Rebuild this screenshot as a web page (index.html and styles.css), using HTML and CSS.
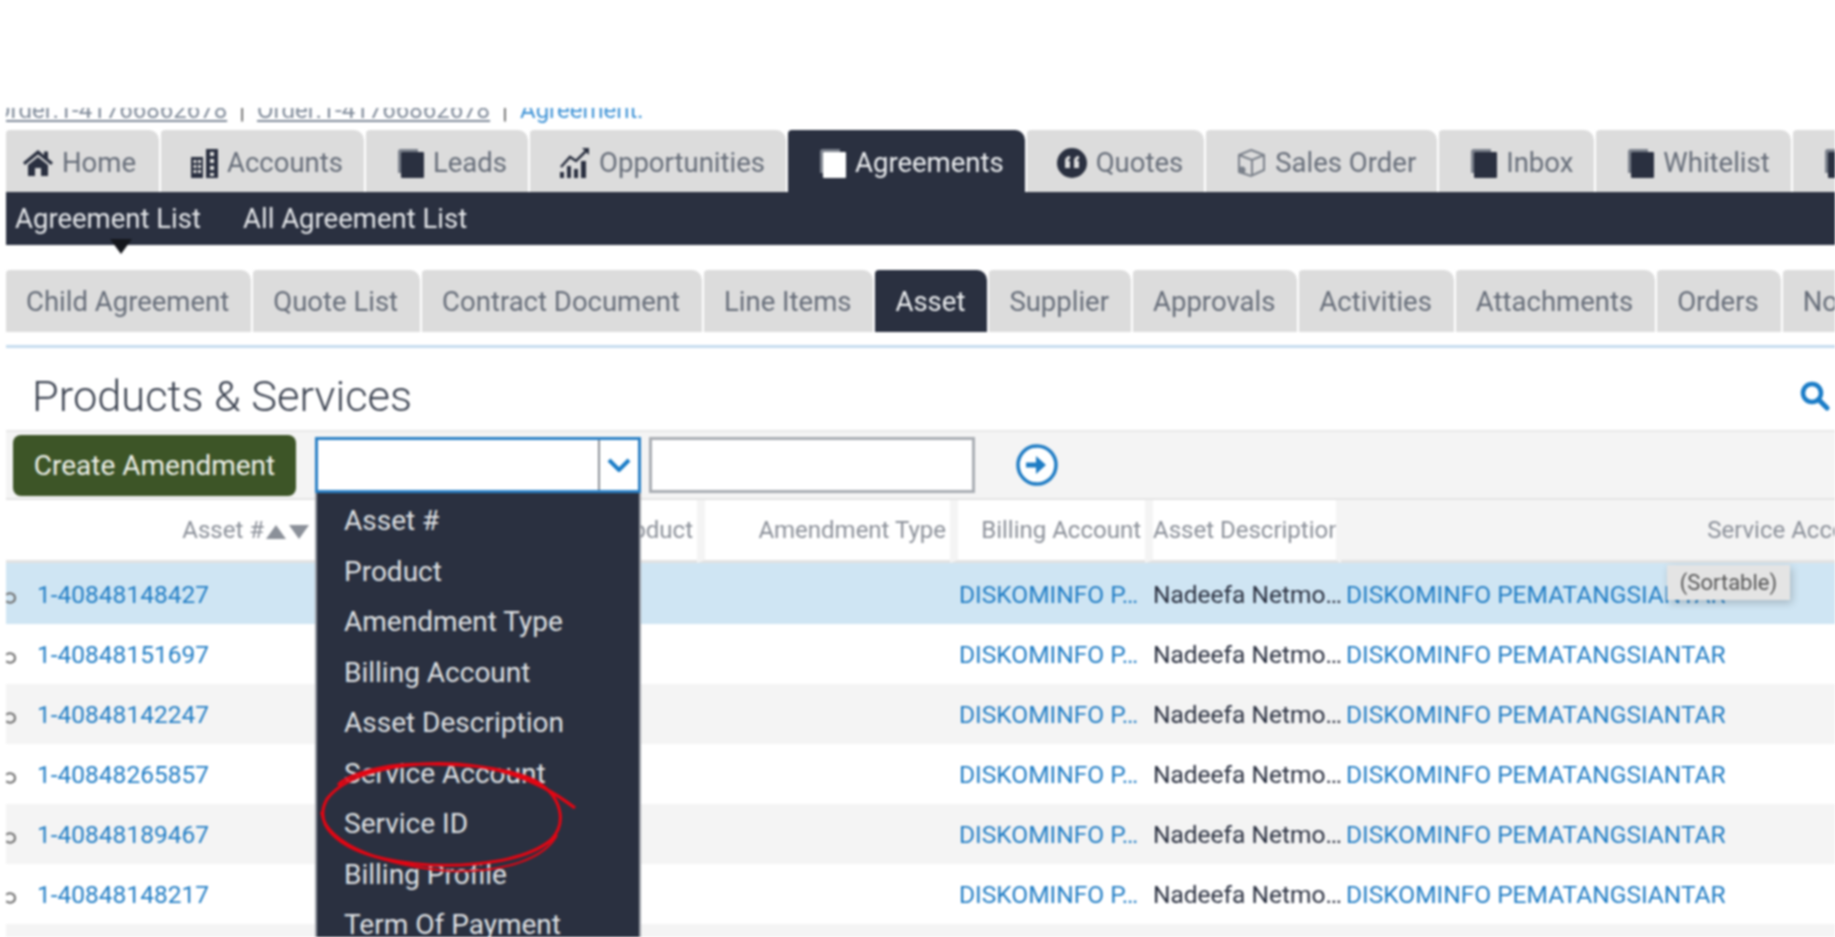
FILE: index.html
```html
<!DOCTYPE html>
<html lang="en">
<head>
    <meta charset="UTF-8">
    <title>Products &amp; Services</title>
    <link rel="stylesheet" href="styles.css">
</head>
<body>
    <svg class="defs" width="0" height="0">
        <symbol id="stack" viewBox="0 0 28 30">
            <path d="M2 25V4a3 3 0 0 1 3-3h17v3H5v21z" class="stack-back"/>
            <rect x="5" y="4" width="23" height="26" rx="1"/>
        </symbol>
    </svg>
    <div class="page">
        <div class="crumbs">
            <div class="crumbs-inner">
                <a href="#" class="crumb-old">Order:1-41766862678</a><span class="sep">|</span><a href="#" class="crumb-old">Order:1-41766862678</a><span class="sep">|</span><a href="#" class="crumb-new">Agreement:</a>
            </div>
        </div>

        <nav class="tabs">
            <a class="tab tab-home"><svg class="ico" width="30" height="26" viewBox="0 0 30 26"><path d="M15 0 0 12.500 2 15 15 4.500 28 15l2-2.500-5-4V1.500h-4v3.700zM15 7 5 15v11h7v-8h6v8h7V15z"/></svg>Home</a>
            <a class="tab"><svg class="ico" width="27" height="30" viewBox="0 0 27 30"><path fill-rule="evenodd" d="M0 9h12v21H0zM2.500 12v3h3v-3zm4.500 0v3h3v-3zm-4.500 5v3h3v-3zm4.500 0v3h3v-3zm-4.500 5v3h3v-3zm4.500 0v3h3v-3zM15 1h12v29H15zm4 3v4h4V4zm0 7v4h4v-4zm0 7v4h4v-4zm0 7v3h4v-3z"/></svg>Accounts</a>
            <a class="tab"><svg class="ico" width="28" height="30"><use href="#stack"/></svg>Leads</a>
            <a class="tab"><svg class="ico" width="30" height="30" viewBox="0 0 30 30"><path d="M0 24h4v6H0zm7-6h4v12H7zm7 3h4v9h-4zm7-8h5v17h-5z"/><path d="M1 19 10 9l6 4L26 3" fill="none" stroke="currentColor" stroke-width="2.500"/><path d="M22 0h7v7z"/></svg>Opportunities</a>
            <a class="tab active"><svg class="ico" width="28" height="30"><use href="#stack"/></svg>Agreements</a>
            <a class="tab"><svg class="ico" width="30" height="30" viewBox="0 0 30 30"><path fill-rule="evenodd" d="M15 0a15 15 0 1 0 0 30 15 15 0 0 0 0-30zM8 13c0-3 2-5 5-5v3c-1 0-2 1-2 2h2v7H8zm9 0c0-3 2-5 5-5v3c-1 0-2 1-2 2h2v7h-5z"/></svg>Quotes</a>
            <a class="tab"><svg class="ico ico-box" width="30" height="30" viewBox="0 0 30 30"><path d="M15 2 28 7v15L15 28 3 24V7zM3 7l13 5 12-5M16 12v15" fill="none" stroke="currentColor" stroke-width="2"/><circle cx="6" cy="22" r="3.500" fill="currentColor"/></svg>Sales Order</a>
            <a class="tab"><svg class="ico" width="28" height="30"><use href="#stack"/></svg>Inbox</a>
            <a class="tab"><svg class="ico" width="28" height="30"><use href="#stack"/></svg>Whitelist</a>
            <a class="tab"><svg class="ico" width="28" height="30"><use href="#stack"/></svg></a>
        </nav>

        <div class="subnav">
            <a class="subnav-item current">Agreement List</a>
            <a class="subnav-item">All Agreement List</a>
        </div>

        <nav class="subtabs">
            <a class="subtab">Child Agreement</a>
            <a class="subtab">Quote List</a>
            <a class="subtab">Contract Document</a>
            <a class="subtab">Line Items</a>
            <a class="subtab active">Asset</a>
            <a class="subtab">Supplier</a>
            <a class="subtab">Approvals</a>
            <a class="subtab">Activities</a>
            <a class="subtab">Attachments</a>
            <a class="subtab">Orders</a>
            <a class="subtab">No</a>
        </nav>
        <div class="rule"></div>

        <div class="section-head">
            <h1>Products &amp; Services</h1>
            <svg class="search" width="30" height="30" viewBox="0 0 30 30"><circle cx="12" cy="12" r="9" fill="none" stroke="currentColor" stroke-width="4.500"/><path d="m18.500 18.500 8.500 8.500" stroke="currentColor" stroke-width="5" stroke-linecap="round"/></svg>
        </div>

        <div class="toolbar">
            <button class="btn-green">Create Amendment</button>
            <div class="select-wrap">
                <div class="select">
                    <div class="select-value"></div>
                    <div class="select-arrow"><svg width="24" height="14" viewBox="0 0 24 14"><path d="M2 2l10 10L22 2" fill="none" stroke="currentColor" stroke-width="4"/></svg></div>
                </div>
                <ul class="dropdown">
                    <li>Asset #</li>
                    <li>Product</li>
                    <li>Amendment Type</li>
                    <li>Billing Account</li>
                    <li>Asset Description</li>
                    <li>Service Account</li>
                    <li>Service ID</li>
                    <li>Billing Profile</li>
                    <li>Term Of Payment</li>
                </ul>
            </div>
            <input class="search-input" type="text">
            <svg class="go" width="42" height="42" viewBox="0 0 42 42"><circle cx="21" cy="21" r="19" fill="#fff" stroke="currentColor" stroke-width="3.500"/><path d="M10 18.500h10V12l10 9-10 9v-6.500H10z" fill="currentColor"/></svg>
        </div>

        <table class="grid">
            <colgroup>
                <col class="c-asset"><col class="c-product"><col class="c-type"><col class="c-billing"><col class="c-desc"><col class="c-service">
            </colgroup>
            <thead>
                <tr>
                    <th class="th-asset">Asset #<span class="sort"><i class="up"></i><i class="down"></i></span></th>
                    <th>Product</th>
                    <th>Amendment Type</th>
                    <th>Billing Account</th>
                    <th class="th-desc"><div class="th-clip">Asset Description</div></th>
                    <th class="th-service">Service Account</th>
                </tr>
            </thead>
            <tbody>
                <tr class="selected">
                    <td><svg class="row-ico" width="12" height="12" viewBox="0 0 12 12"><path d="M2 2.500C7 0 11 2 11 6s-4 6-9 3.500" fill="none" stroke="currentColor" stroke-width="2"/></svg><a href="#">1-40848148427</a></td>
                    <td></td><td></td>
                    <td><a href="#">DISKOMINFO P…</a></td>
                    <td>Nadeefa Netmo…</td>
                    <td><a href="#">DISKOMINFO PEMATANGSIANTAR</a></td>
                </tr>
                <tr>
                    <td><svg class="row-ico" width="12" height="12" viewBox="0 0 12 12"><path d="M2 2.500C7 0 11 2 11 6s-4 6-9 3.500" fill="none" stroke="currentColor" stroke-width="2"/></svg><a href="#">1-40848151697</a></td>
                    <td></td><td></td>
                    <td><a href="#">DISKOMINFO P…</a></td>
                    <td>Nadeefa Netmo…</td>
                    <td><a href="#">DISKOMINFO PEMATANGSIANTAR</a></td>
                </tr>
                <tr class="alt">
                    <td><svg class="row-ico" width="12" height="12" viewBox="0 0 12 12"><path d="M2 2.500C7 0 11 2 11 6s-4 6-9 3.500" fill="none" stroke="currentColor" stroke-width="2"/></svg><a href="#">1-40848142247</a></td>
                    <td></td><td></td>
                    <td><a href="#">DISKOMINFO P…</a></td>
                    <td>Nadeefa Netmo…</td>
                    <td><a href="#">DISKOMINFO PEMATANGSIANTAR</a></td>
                </tr>
                <tr>
                    <td><svg class="row-ico" width="12" height="12" viewBox="0 0 12 12"><path d="M2 2.500C7 0 11 2 11 6s-4 6-9 3.500" fill="none" stroke="currentColor" stroke-width="2"/></svg><a href="#">1-40848265857</a></td>
                    <td></td><td></td>
                    <td><a href="#">DISKOMINFO P…</a></td>
                    <td>Nadeefa Netmo…</td>
                    <td><a href="#">DISKOMINFO PEMATANGSIANTAR</a></td>
                </tr>
                <tr class="alt">
                    <td><svg class="row-ico" width="12" height="12" viewBox="0 0 12 12"><path d="M2 2.500C7 0 11 2 11 6s-4 6-9 3.500" fill="none" stroke="currentColor" stroke-width="2"/></svg><a href="#">1-40848189467</a></td>
                    <td></td><td></td>
                    <td><a href="#">DISKOMINFO P…</a></td>
                    <td>Nadeefa Netmo…</td>
                    <td><a href="#">DISKOMINFO PEMATANGSIANTAR</a></td>
                </tr>
                <tr>
                    <td><svg class="row-ico" width="12" height="12" viewBox="0 0 12 12"><path d="M2 2.500C7 0 11 2 11 6s-4 6-9 3.500" fill="none" stroke="currentColor" stroke-width="2"/></svg><a href="#">1-40848148217</a></td>
                    <td></td><td></td>
                    <td><a href="#">DISKOMINFO P…</a></td>
                    <td>Nadeefa Netmo…</td>
                    <td><a href="#">DISKOMINFO PEMATANGSIANTAR</a></td>
                </tr>
                <tr class="alt">
                    <td></td><td></td><td></td><td></td><td></td><td></td>
                </tr>
            </tbody>
        </table>

        <div class="tooltip">(Sortable)</div>

        <svg class="scribble" width="1835" height="937" viewBox="0 0 1835 937">
            <path d="M575 808C548 787 510 767 455 764 395 761 345 775 327 799 313 824 336 848 385 859 440 871 520 866 551 840 568 822 561 796 536 781 505 765 440 762 400 765 370 768 345 777 338 785" fill="none" stroke="#e30613" stroke-width="3"/>
            <path d="M321 812C328 845 385 866 450 871 505 873 545 858 557 835" fill="none" stroke="#e30613" stroke-width="2"/>
        </svg>
    </div>
</body>
</html>
```

FILE: styles.css
```css
body {
    margin: 0;
    background: #fff;
    font-family: Roboto, "Liberation Sans", sans-serif;
    color: #2a3040;
}
.defs {
    display: block;
    height: 0;
}
.page {
    position: relative;
    width: 1835px;
    height: 937px;
    box-sizing: border-box;
    padding: 108px 0 0 6px;
    overflow: hidden;
    filter: blur(1px);
}

/* breadcrumbs, top half is cut off in the app */
.crumbs {
    height: 15px;
    overflow: hidden;
}
.crumbs-inner {
    margin-top: -11px;
    font-size: 24px;
    line-height: 26px;
    white-space: nowrap;
}
.crumb-old {
    color: #7f8a99;
    text-decoration: underline;
    margin-left: -12px;
}
.crumb-old + .sep + .crumb-old {
    margin-left: 0;
}
.crumb-new {
    color: #3f93d6;
    text-decoration: none;
}
.sep {
    margin: 0 12px;
    color: #666;
}

/* main tabs */
.tabs {
    display: flex;
    gap: 2px;
    height: 62px;
    margin-top: 7px;
}
.tab {
    display: flex;
    align-items: center;
    gap: 9px;
    flex: none;
    padding: 3px 21px 0 30px;
    background: #dcdcdc;
    border-radius: 4px 10px 0 0;
    color: #666d79;
    font-size: 27.500px;
}
.tab-home {
    padding: 3px 23px 0 17px;
}
.tab .ico {
    fill: #2a3040;
    color: #2a3040;
}
.tab .ico-box {
    color: #7a808a;
}
.stack-back {
    fill: #7c828d;
}
.tab.active {
    background: #2a3040;
    color: #eceef0;
}
.tab.active .ico {
    fill: #fff;
}
.tab.active .stack-back {
    fill: #cfd1d5;
}

/* dark second level */
.subnav {
    display: flex;
    gap: 24px;
    height: 53px;
    align-items: center;
    background: #2a3040;
    font-size: 27.500px;
    color: #e4e6e9;
}
.subnav-item {
    position: relative;
    padding: 0 9px;
}
.subnav-item.current::after {
    content: "";
    position: absolute;
    left: 104px;
    top: 37px;
    border: 11px solid transparent;
    border-top: 15px solid #14161c;
    border-bottom: 0;
}

/* third level tabs */
.subtabs {
    display: flex;
    gap: 2px;
    height: 62px;
    margin-top: 25px;
}
.subtab {
    display: flex;
    align-items: center;
    flex: none;
    padding: 1px 22px 0 20px;
    background: #dcdcdc;
    border-radius: 4px 10px 0 0;
    color: #666d79;
    font-size: 27.500px;
}
.subtab.active {
    background: #2a3040;
    color: #eceef0;
}
.rule {
    height: 3px;
    margin-top: 13px;
    background: #c6dcef;
}

.section-head {
    display: flex;
    justify-content: space-between;
    align-items: center;
    height: 82px;
    box-sizing: border-box;
    padding: 14px 5px 0 26px;
}
h1 {
    margin: 0;
    font-size: 43.400px;
    font-weight: 300;
    color: #3b4250;
}
.search {
    color: #1a7cc7;
}

/* toolbar */
.toolbar {
    display: flex;
    align-items: center;
    height: 66px;
    padding-left: 7px;
    background: #f4f4f4;
    border-top: 2px solid #e8e8e8;
    border-bottom: 2px solid #e4e4e4;
}
.btn-green {
    width: 283px;
    height: 61px;
    background: #3d5527;
    border: 0;
    border-radius: 8px;
    color: #eef1ea;
    font-family: inherit;
    font-size: 28px;
}
.select-wrap {
    position: relative;
    width: 326px;
    height: 56px;
    margin-left: 19px;
}
.select {
    display: flex;
    height: 100%;
    box-sizing: border-box;
    background: #fff;
    border: 3px solid #2b80c5;
}
.select-value {
    flex: 1;
}
.select-arrow {
    display: flex;
    align-items: center;
    justify-content: center;
    width: 38px;
    border-left: 2px solid #8a8f97;
    color: #1a7cc7;
}
.dropdown {
    position: absolute;
    left: 0;
    top: 100%;
    z-index: 5;
    width: 326px;
    box-sizing: border-box;
    margin: 0;
    padding: 3px 0 0 27px;
    list-style: none;
    background: #2a3040;
    border-left: 2px solid #9a9ea5;
    border-right: 2px solid #9a9ea5;
    color: #dfe1e4;
    font-size: 28px;
}
.dropdown li {
    height: 50.500px;
    line-height: 50px;
}
.search-input {
    width: 326px;
    height: 56px;
    box-sizing: border-box;
    margin-left: 8px;
    background: #fff;
    border: 3px solid #a9adb3;
}
.go {
    margin-left: 41px;
    color: #1f7cc4;
}

/* asset table */
.grid {
    width: 1878px;
    table-layout: fixed;
    border-collapse: separate;
    border-spacing: 0;
}
.c-asset { width: 312px; }
.c-product { width: 379px; }
.c-type { width: 253px; }
.c-billing { width: 195px; }
.c-desc { width: 196px; }
.c-service { width: 543px; }

th {
    height: 63px;
    box-sizing: border-box;
    padding: 0 4px 0 0;
    background: #fff;
    border-left: 8px solid #f4f4f4;
    border-bottom: 3px solid #e2e2e2;
    color: #8b9099;
    font-size: 24px;
    font-weight: 400;
    text-align: right;
    white-space: nowrap;
}
th.th-asset {
    border-left: 0;
    padding-right: 9px;
}
th.th-desc {
    padding: 0;
    text-align: left;
    border-right: 5px solid #f4f4f4;
}
.th-clip {
    overflow: hidden;
}
th.th-service {
    background: #f4f4f4;
    border-left: 0;
}
.sort {
    display: inline-flex;
    gap: 3px;
    margin-left: 2px;
    vertical-align: middle;
}
.sort i {
    border: 10px solid transparent;
    border-top: 0;
    border-bottom: 14px solid #8b9099;
}
.sort i.down {
    border: 10px solid transparent;
    border-bottom: 0;
    border-top: 14px solid #8b9099;
}
td {
    height: 60px;
    box-sizing: border-box;
    padding: 1px 0 0;
    font-size: 24.500px;
    white-space: nowrap;
    overflow: hidden;
}
td:nth-child(4) {
    padding-left: 9px;
}
td:nth-child(5) {
    padding-left: 8px;
}
td:nth-child(6) {
    padding-left: 5px;
}
td a {
    color: #1f7cc4;
    text-decoration: none;
}
tr.selected td {
    height: 61px;
    background: #cfe5f3;
}
tr.alt td {
    background: #f4f4f4;
}
.row-ico {
    margin: 0 21px 0 -2px;
    vertical-align: -1px;
    color: #6e6e6e;
}

/* things lying over the table */
.tooltip {
    position: absolute;
    left: 1667px;
    top: 565px;
    width: 123px;
    height: 35px;
    background: #e4e4e4;
    box-shadow: 2px 3px 8px rgba(0, 0, 0, 0.2);
    color: #555;
    font-size: 22px;
    line-height: 35px;
    text-align: center;
}
.scribble {
    position: absolute;
    left: 0;
    top: 0;
    z-index: 6;
    pointer-events: none;
}
```
